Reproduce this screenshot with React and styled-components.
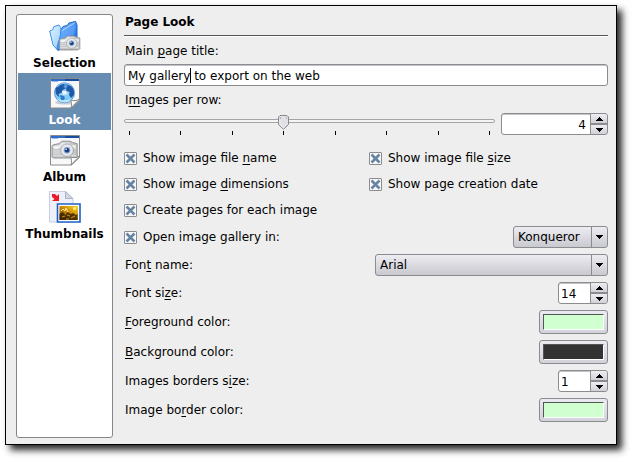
import React, { useState } from "react";
import styled, { createGlobalStyle } from "styled-components";

const GlobalStyle = createGlobalStyle`
  * { box-sizing: border-box; }
  body {
    margin: 0;
    background: #fff;
    color: #000;
    font: 12px/15px "DejaVu Sans", Verdana, sans-serif;
  }
  button, input, select { font: inherit; color: inherit; }
  u {
    text-decoration-thickness: 1px;
    text-underline-offset: 2px;
    text-decoration-skip-ink: none;
  }
`;

const Page = styled.div`
  display: flex;
  min-height: 100vh;
  padding: 5px 15px 15px 5px;
`;

const Dialog = styled.main`
  flex: 1;
  display: flex;
  gap: 11px;
  padding: 8px 8px 6px 10px;
  background: #eeeeee;
  border: 1px solid #000;
  box-shadow: 5px 5px 7px 0 rgba(0, 0, 0, 0.85);
`;

const Sidebar = styled.nav`
  width: 97px;
  flex: none;
  display: flex;
  flex-direction: column;
  padding: 1px;
  background: #fff;
  border: 1px solid #86868a;
  border-radius: 3px;
`;

const SideItem = styled.button`
  height: 57px;
  display: flex;
  flex-direction: column;
  align-items: center;
  gap: 4px;
  padding: 4px 0 0;
  border: 0;
  font-weight: bold;
  background: ${(p) => (p.$active ? "#678db2" : "transparent")};
  color: ${(p) => (p.$active ? "#fff" : "#000")};
  svg { flex: none; }
`;

const Panel = styled.form`
  flex: 1;
  min-width: 0;
  display: flex;
  flex-direction: column;
  gap: 6px;
  > h1, > label {
    line-height: 17px;
    margin-bottom: -2px;
  }
`;

const Title = styled.h1`
  margin: 0;
  padding-left: 1px;
  font-size: 12px;
`;

const Rule = styled.hr`
  width: 100%;
  height: 2px;
  margin: 0;
  border: 0;
  border-top: 1px solid #555557;
  border-bottom: 1px solid #fff;
`;

const FieldLabel = styled.label`
  padding-left: 1px;
`;

const TextWrap = styled.div`
  position: relative;
  display: flex;
`;

const TextInput = styled.input`
  width: 100%;
  height: 22px;
  padding: 2px 3px 0;
  background: #fff;
  border: 1px solid #8b8b90;
  border-radius: 3px;
  box-shadow: inset 0 1px 0 #c4c4c8;
  outline: none;
`;

const Caret = styled.span`
  position: absolute;
  left: 66px;
  top: 4px;
  width: 1px;
  height: 15px;
  background: #000;
`;

const Row = styled.div`
  display: flex;
  align-items: center;
  justify-content: space-between;
  gap: 6px;
`;

const SliderBox = styled.div`
  flex: 1;
  position: relative;
  height: 22px;
  display: flex;
  flex-direction: column;
  justify-content: space-between;
  padding-top: 6px;
`;

const Range = styled.input`
  appearance: none;
  display: block;
  width: 100%;
  height: 4px;
  margin: 0;
  background: #f4f4f4;
  border: 1px solid #a4a4a6;
  border-radius: 2px;
  outline: none;
  &::-webkit-slider-thumb {
    appearance: none;
    width: 12px;
    height: 16px;
    opacity: 0;
  }
`;

const Ticks = styled.div`
  display: flex;
  justify-content: space-between;
  padding: 0 5px;
`;

const Tick = styled.span`
  width: 1px;
  height: 4px;
  background: #000;
`;

const ThumbRail = styled.div`
  position: absolute;
  top: 2px;
  left: 5px;
  right: 6px;
  pointer-events: none;
`;

const ThumbSvg = styled.svg`
  position: absolute;
  margin-left: -5px;
`;

const SpinFrame = styled.div`
  width: ${(p) => p.$width};
  height: 22px;
  flex: none;
  display: flex;
  overflow: hidden;
  background: #fff;
  border: 1px solid #8b8b90;
  border-radius: 3px;
  box-shadow: inset 0 1px 0 #c4c4c8;
`;

const SpinInput = styled.input`
  flex: 1;
  min-width: 0;
  padding: 3px ${(p) => (p.$align === "right" ? "4px" : "0")} 0 2px;
  border: 0;
  background: transparent;
  outline: none;
  text-align: ${(p) => p.$align};
`;

const SpinButtons = styled.div`
  width: 17px;
  display: grid;
  grid-template-rows: 1fr 1fr;
  gap: 2px;
  background: #8b8b90;
  border-left: 1px solid #8b8b90;
`;

const SpinButton = styled.button`
  display: flex;
  align-items: center;
  justify-content: center;
  padding: 0;
  border: 0;
  background: linear-gradient(#eeeef2, #d0d0d6);
`;

const CheckGrid = styled.div`
  display: grid;
  grid-template-columns: 1fr 1fr;
  gap: 6px;
  padding-top: 7px;
`;

const CheckLabel = styled.label`
  display: flex;
  align-items: center;
  gap: 6px;
  min-height: 20px;
`;

const CheckFrame = styled.span`
  display: grid;
  width: 13px;
  height: 13px;
  > * { grid-area: 1 / 1; }
  svg { pointer-events: none; }
`;

const CheckInput = styled.input`
  appearance: none;
  width: 13px;
  height: 13px;
  margin: 0;
  background: #f9f9fa;
  border: 1px solid #8b8b90;
  border-radius: 1px;
  &:not(:checked) + svg { visibility: hidden; }
`;

const SelectFrame = styled.div`
  width: ${(p) => p.$width};
  height: 22px;
  flex: none;
  display: grid;
  grid-template-columns: 1fr 16px;
  background: linear-gradient(#ececf1, #c9c9d0);
  border: 1px solid #8b8b90;
  border-radius: 3px;
`;

const Select = styled.select`
  appearance: none;
  grid-area: 1 / 1 / 2 / 3;
  min-width: 0;
  padding: 0 20px 0 4px;
  border: 0;
  background: transparent;
  outline: none;
`;

const SelectArrow = styled.span`
  grid-area: 1 / 2;
  display: flex;
  align-items: center;
  justify-content: center;
  border-left: 1px solid #8b8b90;
  pointer-events: none;
`;

const ColorButton = styled.button`
  width: 69px;
  height: 24px;
  flex: none;
  display: flex;
  padding: 3px;
  background: linear-gradient(#eaeaf1, #d2d2da);
  border: 1px solid #8b8b90;
  border-radius: 3px;
`;

const Swatch = styled.span`
  flex: 1;
  align-self: stretch;
  background: ${(p) => p.$color};
  border: 1px solid #fff;
  border-top-color: #555;
  border-left-color: #555;
`;

const Arrow = ({ up }) => (
  <svg width="7" height="4" viewBox="0 0 7 4" shapeRendering="crispEdges" aria-hidden="true">
    <path d={up ? "M3 0h1v1h1v1h1v1h1v1H0V3h1V2h1V1h1z" : "M0 0h7v1H6v1H5v1H4v1H3V3H2V2H1V1H0z"} />
  </svg>
);

const Camera = ({ x, y, s = 1 }) => (
  <g transform={`translate(${x} ${y}) scale(${s})`}>
    <path d="M1 4l5-1 2-2h7l2 1 4 1v11l-1 1H1l-1-1V5z" fill="#c3c5c6" stroke="#8f9193" strokeWidth=".8" />
    <path d="M1 5l6-1 1-2h6l2 2 4 .5V7H1z" fill="#e9ebec" />
    <path d="M1 9h7M1 11h7M1 13h19" stroke="#dcdee0" strokeWidth="1" />
    <circle cx="12.5" cy="8.5" r="5.3" fill="#e6e8ea" stroke="#a3a6a8" strokeWidth=".8" />
    <circle cx="12.5" cy="8.5" r="3.3" fill="#8ba4c8" stroke="#fff" strokeWidth=".6" />
    <circle cx="12.5" cy="8.5" r="1.9" fill="#183d80" />
    <circle cx="11.8" cy="7.7" r=".7" fill="#d4e8ff" />
    <path d="M2 6.5h3" stroke="#fff" strokeWidth="1.3" />
  </g>
);

const SelectionIcon = () => (
  <svg width="32" height="32" viewBox="0 0 32 32" aria-hidden="true">
    <defs>
      <linearGradient id="folderFront" x1="0" y1="0" x2="1" y2="1">
        <stop offset="0" stopColor="#9cc8ff" />
        <stop offset=".5" stopColor="#4d97f5" />
        <stop offset="1" stopColor="#0755d4" />
      </linearGradient>
      <linearGradient id="folderBack" x1="0" y1="0" x2="1" y2="1">
        <stop offset="0" stopColor="#e5f7ff" />
        <stop offset="1" stopColor="#8fcaff" />
      </linearGradient>
    </defs>
    <path d="M12 10L14 6.5l4-1 2-2.5 6.5-1.6L28 5v12L9 30.5 5.2 25 10 13z" fill="url(#folderFront)" stroke="#1767cb" />
    <path d="M12.5 11L25.5 3" stroke="#bfdfff" strokeWidth=".9" />
    <path d="M13 12l13-7-1 9-14 8z" fill="#68a9fb" opacity=".55" />
    <path d="M.7 11l3-1.2 1.2-3.2 5-1.6 2 2.7L11.5 15 8 27l1 3.5L4 25z" fill="url(#folderBack)" stroke="#2f83e4" strokeWidth=".9" />
    <path d="M8 31h20l4-3H12z" fill="#999" opacity=".4" />
    <Camera x={10.5} y={15} s={0.97} />
  </svg>
);

const WebPage = ({ children }) => (
  <>
    <path d="M1.5 1.5h29v22l-8 7.5h-21z" fill="#f8f8f8" stroke="#898b8c" />
    <path d="M2 2h28v3H2z" fill="#f0f5ff" />
    <path d="M2 2h14v2H2z" fill="#2e6dca" />
    <path d="M16 2h14v2H16z" fill="#174f9f" />
    <path d="M3 4.5h6" stroke="#94baf1" />
    {children}
    <path d="M22 31c1-3 .5-6-.5-8 3 1 6 1 9-1z" fill="#fff" stroke="#858789" strokeLinejoin="round" />
    <path d="M24 28l4-4" stroke="#d6d6d6" />
  </>
);

const LookIcon = () => (
  <svg width="32" height="32" viewBox="0 0 32 32" aria-hidden="true">
    <defs>
      <linearGradient id="globe" x1="0" y1="0" x2="0" y2="1">
        <stop offset="0" stopColor="#2f74cc" />
        <stop offset=".45" stopColor="#a9d6f8" />
        <stop offset="1" stopColor="#5cc0f6" />
      </linearGradient>
    </defs>
    <WebPage>
      <ellipse cx="16" cy="25.5" rx="10" ry="2" fill="#c9ccd2" />
      <circle cx="15.5" cy="15.8" r="10" fill="url(#globe)" stroke="#3a83d4" strokeWidth=".8" />
      <path d="M6.5 12c2-4 5-6 9-5.5l-1 3 2 2-3 1.500-1 3-3 1 1 3-2-1-2-3zM18 7.500c3 .5 6 3 7 6.500v4l-3 3-2-3 .5-3-3-1-.5-3 2-2z" fill="#1c5aa8" />
      <path d="M11 18l4 1 1 2-2 3-2-1z" fill="#2e7bcd" />
      <path d="M8 10c3-4 9-5 14-1.500" stroke="#8ac3f5" fill="none" strokeWidth="1.200" />
      <path d="M8 21c4 3 10 3 15 0-1 3-4 4.500-7.500 4.500S9 24 8 21z" fill="#c5f0ff" opacity=".85" />
      <path d="M13 14l4 0 1 3-4 1z" fill="#eefaff" opacity=".9" />
    </WebPage>
  </svg>
);

const AlbumIcon = () => (
  <svg width="32" height="32" viewBox="0 0 32 32" aria-hidden="true">
    <WebPage>
      <path d="M3 24h22l3-2H4z" fill="#aaa" opacity=".5" />
      <Camera x={3} y={6} s={1.2} />
    </WebPage>
  </svg>
);

const ThumbnailsIcon = () => (
  <svg width="32" height="32" viewBox="0 0 32 32" aria-hidden="true">
    <defs>
      <linearGradient id="sunset" x1="0" y1="1" x2="1" y2="0">
        <stop offset="0" stopColor="#643c00" />
        <stop offset=".5" stopColor="#c98605" />
        <stop offset="1" stopColor="#ffd52f" />
      </linearGradient>
    </defs>
    <path d="M.5.5h16L24 8v23H.5z" fill="#edf0fa" stroke="#c9cddd" />
    <path d="M16.5.5v7H24z" fill="#d2d7e4" stroke="#aeb5c6" />
    <path d="M3 3l3 0 2 2 2-2v7H3l2.500-2L3 6z" fill="#ed1728" />
    <path d="M8.500 13h22.500v18H8.500z" fill="#fff" stroke="#1e60c4" strokeWidth="1.600" />
    <path d="M10.500 15h18.500v14H10.500z" fill="url(#sunset)" />
    <path d="M10.500 23l3-2 3 3 2-3 3 2 3-1 2 2 2-1v6H10.500z" fill="#2a1900" opacity=".75" />
    <path d="M12 20l2-2 2 2 1-3 2 4" stroke="#ffe998" fill="none" />
    <path d="M13 26l3-1M18 24l3 1M22 27l4-2M17 28h3" stroke="#bd8b1d" strokeWidth="1.200" />
    <circle cx="25.500" cy="17.500" r="1.500" fill="#fff27b" />
  </svg>
);

function Check({ children }) {
  return (
    <CheckLabel>
      <CheckFrame>
        <CheckInput type="checkbox" defaultChecked />
        <svg width="13" height="13" viewBox="0 0 13 13" aria-hidden="true">
          <path d="M2.500 2.500l8 8M10.500 2.500l-8 8" stroke="#6884a4" strokeWidth="2.600" />
        </svg>
      </CheckFrame>
      <span>{children}</span>
    </CheckLabel>
  );
}

function Spin({ id, label, value, onChange, width = "50px", align = "left" }) {
  const set = (n) => onChange(Math.max(1, n));
  return (
    <SpinFrame $width={width}>
      <SpinInput
        id={id}
        aria-label={label}
        inputMode="numeric"
        $align={align}
        value={value}
        onChange={(e) => set(Number(e.target.value) || 1)}
      />
      <SpinButtons>
        <SpinButton type="button" aria-label="Increase" onClick={() => set(value + 1)}><Arrow up /></SpinButton>
        <SpinButton type="button" aria-label="Decrease" onClick={() => set(value - 1)}><Arrow /></SpinButton>
      </SpinButtons>
    </SpinFrame>
  );
}

function Combo({ id, label, width, options }) {
  return (
    <SelectFrame $width={width}>
      <Select id={id} aria-label={label}>
        {options.map((o) => <option key={o}>{o}</option>)}
      </Select>
      <SelectArrow><Arrow /></SelectArrow>
    </SelectFrame>
  );
}

function Slider({ value, onChange }) {
  const min = 1;
  const max = 8;
  return (
    <SliderBox>
      <Range id="per-row" type="range" min={min} max={max} value={value} onChange={(e) => onChange(Number(e.target.value))} />
      <Ticks>
        {Array.from({ length: max }, (_, i) => <Tick key={i} />)}
      </Ticks>
      <ThumbRail>
        <ThumbSvg
          width="11" height="15" viewBox="0 0 11 15" aria-hidden="true"
          style={{ left: `${((Math.min(value, max) - min) / (max - min)) * 100}%` }}
        >
          <path d="M2 .5h7L10.5 2v7.5L5.5 14.3.5 9.5V2z" fill="#e0e0e5" stroke="#88888d" />
          <path d="M2 3h1M8 3h1" stroke="#88888d" />
          <path d="M2 5v4l3.5 3.5" stroke="#fff" fill="none" opacity=".6" />
        </ThumbSvg>
      </ThumbRail>
    </SliderBox>
  );
}

const sections = [
  ["Selection", SelectionIcon],
  ["Look", LookIcon],
  ["Album", AlbumIcon],
  ["Thumbnails", ThumbnailsIcon],
];

export default function App() {
  const [section, setSection] = useState("Look");
  const [perRow, setPerRow] = useState(4);
  const [fontSize, setFontSize] = useState(14);
  const [border, setBorder] = useState(1);

  return (
    <Page>
      <GlobalStyle />
      <Dialog>
        <Sidebar>
          {sections.map(([name, Icon]) => (
            <SideItem key={name} type="button" $active={name === section} onClick={() => setSection(name)}>
              <Icon />
              {name}
            </SideItem>
          ))}
        </Sidebar>
        <Panel>
          <Title>Page Look</Title>
          <Rule />
          <FieldLabel htmlFor="page-title">Main <u>p</u>age title:</FieldLabel>
          <TextWrap>
            <TextInput id="page-title" type="text" defaultValue="My gallery to export on the web" />
            <Caret />
          </TextWrap>
          <FieldLabel htmlFor="per-row">I<u>m</u>ages per row:</FieldLabel>
          <Row>
            <Slider value={perRow} onChange={setPerRow} />
            <Spin label="Images per row" width="107px" align="right" value={perRow} onChange={setPerRow} />
          </Row>
          <CheckGrid>
            <Check>Show image file <u>n</u>ame</Check>
            <Check>Show image file <u>s</u>ize</Check>
            <Check>Show image <u>d</u>imensions</Check>
            <Check>Show page creation date</Check>
            <Check>Create pages for each image</Check>
          </CheckGrid>
          <Row>
            <Check>Open image gallery in:</Check>
            <Combo label="Open image gallery in" width="95px" options={["Konqueror"]} />
          </Row>
          <Row>
            <FieldLabel htmlFor="font-name">Fon<u>t</u> name:</FieldLabel>
            <Combo id="font-name" width="233px" options={["Arial"]} />
          </Row>
          <Row>
            <FieldLabel htmlFor="font-size">Font si<u>z</u>e:</FieldLabel>
            <Spin id="font-size" value={fontSize} onChange={setFontSize} />
          </Row>
          <Row>
            <FieldLabel htmlFor="foreground"><u>F</u>oreground color:</FieldLabel>
            <ColorButton id="foreground" type="button"><Swatch $color="#d0ffd0" /></ColorButton>
          </Row>
          <Row>
            <FieldLabel htmlFor="background"><u>B</u>ackground color:</FieldLabel>
            <ColorButton id="background" type="button"><Swatch $color="#333333" /></ColorButton>
          </Row>
          <Row>
            <FieldLabel htmlFor="border-size">Images borders s<u>i</u>ze:</FieldLabel>
            <Spin id="border-size" value={border} onChange={setBorder} />
          </Row>
          <Row>
            <FieldLabel htmlFor="border-color">Image bo<u>r</u>der color:</FieldLabel>
            <ColorButton id="border-color" type="button"><Swatch $color="#d0ffd0" /></ColorButton>
          </Row>
        </Panel>
      </Dialog>
    </Page>
  );
}
